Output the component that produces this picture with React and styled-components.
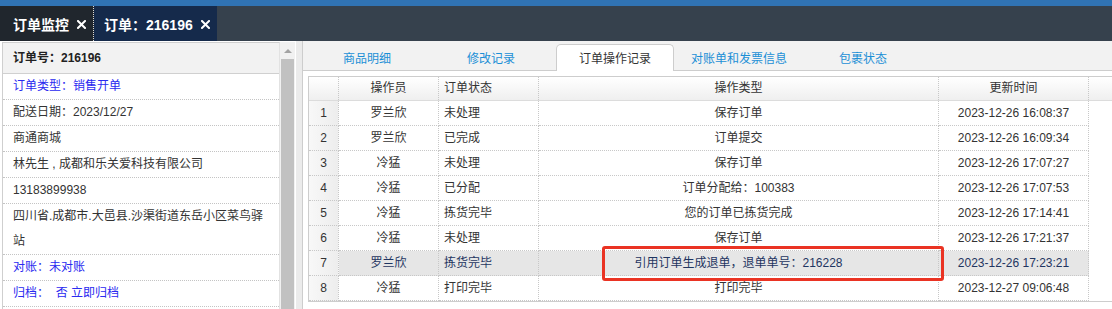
import styled, { createGlobalStyle } from "styled-components";

const GlobalStyle = createGlobalStyle`
	html, body {
		margin: 0;
		padding: 0;
		background: #fff;
	}
	body {
		font-family: "Liberation Sans", "Noto Sans CJK SC", sans-serif;
		font-size: 12px;
		color: #333;
	}
	* {
		box-sizing: border-box;
	}
`;

const COLS = "30px 100px 100px 400px 150px 1fr";

const records = [
	["罗兰欣", "未处理", "保存订单", "2023-12-26 16:08:37"],
	["罗兰欣", "已完成", "订单提交", "2023-12-26 16:09:34"],
	["冷猛", "未处理", "保存订单", "2023-12-26 17:07:27"],
	["冷猛", "已分配", "订单分配给：100383", "2023-12-26 17:07:53"],
	["冷猛", "拣货完毕", "您的订单已拣货完成", "2023-12-26 17:14:41"],
	["冷猛", "未处理", "保存订单", "2023-12-26 17:21:37"],
	["罗兰欣", "拣货完毕", "引用订单生成退单，退单单号：216228", "2023-12-26 17:23:21"],
	["冷猛", "打印完毕", "打印完毕", "2023-12-27 09:06:48"],
];

const tabs = ["商品明细", "修改记录", "订单操作记录", "对账单和发票信息", "包裹状态"];

const CloseIcon = () => (
	<svg width="9" height="9" viewBox="0 0 9 9">
		<path d="M1 1 L8 8 M8 1 L1 8" stroke="#fff" strokeWidth="2" strokeLinecap="square" />
	</svg>
);

const App = () => {
	return (
		<Page>
			<GlobalStyle />
			<TopStrip />
			<TabBar>
				<MainTab $first>
					订单监控
					<CloseBox>
						<CloseIcon />
					</CloseBox>
				</MainTab>
				<MainTab $current>
					订单：216196
					<CloseBox>
						<CloseIcon />
					</CloseBox>
				</MainTab>
			</TabBar>
			<Body>
				<LeftCol>
					<InfoPanel>
						<InfoHead>订单号：216196</InfoHead>
						<InfoRow $link>订单类型：销售开单</InfoRow>
						<InfoRow>配送日期：2023/12/27</InfoRow>
						<InfoRow>商通商城</InfoRow>
						<InfoRow>林先生 , 成都和乐关爱科技有限公司</InfoRow>
						<InfoRow>13183899938</InfoRow>
						<InfoRow>四川省.成都市.大邑县.沙渠街道东岳小区菜鸟驿站</InfoRow>
						<InfoRow $link>对账：未对账</InfoRow>
						<InfoRow $link>归档：&nbsp; 否 立即归档</InfoRow>
						<InfoRow>&nbsp;</InfoRow>
					</InfoPanel>
					<ScrollTrack>
						<ScrollArrow />
						<ScrollThumb />
					</ScrollTrack>
				</LeftCol>
				<Splitter />
				<RightPanel>
					<TabsHeader>
						{tabs.map((t, i) => (
							<SubTab key={t} $active={i === 2}>
								{t}
							</SubTab>
						))}
					</TabsHeader>
					<TabContent>
						<Grid>
							<HeadRow>
								<HeadCell />
								<HeadCell $align="center">操作员</HeadCell>
								<HeadCell>订单状态</HeadCell>
								<HeadCell $align="center">操作类型</HeadCell>
								<HeadCell $align="center">更新时间</HeadCell>
								<HeadCell $filler />
							</HeadRow>
							{records.map((r, i) => (
								<Row key={i} $selected={i === 6}>
									<NumCell>{i + 1}</NumCell>
									<Cell $align="center">{r[0]}</Cell>
									<Cell>{r[1]}</Cell>
									<Cell $align="center">{r[2]}</Cell>
									<Cell $align="center">{r[3]}</Cell>
									<Cell $filler />
								</Row>
							))}
							<Highlight />
						</Grid>
					</TabContent>
				</RightPanel>
			</Body>
		</Page>
	);
};

const Page = styled.div`
	width: 1112px;
	height: 309px;
	overflow: hidden;
	display: flex;
	flex-direction: column;
`;

const TopStrip = styled.div`
	height: 6px;
	background: #3073b4;
`;

const TabBar = styled.div`
	height: 35px;
	background: #36414d;
	display: flex;
`;

const MainTab = styled.div`
	display: flex;
	align-items: center;
	height: 100%;
	padding: 0 7px 0 ${(p) => (p.$first ? "13px" : "10px")};
	background: ${(p) => (p.$current ? "#152a4b" : "#20262d")};
	border-right: ${(p) => (p.$first ? "1px dotted #d8d8d8" : "none")};
	color: #fff;
	font-size: 14px;
	font-weight: 700;
	white-space: nowrap;
`;

const CloseBox = styled.span`
	display: flex;
	margin-left: 8px;
	margin-top: 1px;
`;

const Body = styled.div`
	flex: 1;
	display: flex;
	min-height: 0;
`;

const LeftCol = styled.div`
	width: 296px;
	display: flex;
	padding: 1px 1px 0 2px;
`;

const InfoPanel = styled.div`
	width: 278px;
	border-left: 1px solid #cfcfcf;
	border-top: 1px solid #cfcfcf;
	border-right: 1px solid #e2e2e2;
	overflow: hidden;
`;

const InfoHead = styled.div`
	height: 31px;
	line-height: 30px;
	padding-left: 10px;
	background: #f2f2f2;
	border-bottom: 1px solid #d0d0d0;
	font-weight: 700;
	color: #222;
`;

const InfoRow = styled.div`
	line-height: 25px;
	padding: 0 10px;
	border-bottom: 1px dotted #c4c4c4;
	color: ${(p) => (p.$link ? "#2a2af0" : "#333")};
`;

const ScrollTrack = styled.div`
	width: 15px;
	background: #f1f1f1;
	display: flex;
	flex-direction: column;
	align-items: center;
`;

const ScrollArrow = styled.div`
	height: 17px;
	display: flex;
	align-items: center;
	justify-content: center;
	&::after {
		content: "";
		border-left: 4px solid transparent;
		border-right: 4px solid transparent;
		border-bottom: 4px solid #a3a3a3;
	}
`;

const ScrollThumb = styled.div`
	flex: 1;
	width: 13px;
	background: #c1c1c1;
`;

const Splitter = styled.div`
	width: 6px;
	background: #ebebeb;
`;

const RightPanel = styled.div`
	flex: 1;
	min-width: 0;
	border-left: 1px solid #cdcdcd;
	display: flex;
	flex-direction: column;
`;

const TabsHeader = styled.div`
	height: 30px;
	background: #f2f2f2;
	border-bottom: 1px solid #cdcdcd;
	display: flex;
	align-items: flex-end;
	gap: 6px;
	padding-left: 5px;
`;

const SubTab = styled.div`
	width: 118px;
	height: ${(p) => (p.$active ? "27px" : "26px")};
	margin-bottom: ${(p) => (p.$active ? "-1px" : "0")};
	display: flex;
	align-items: center;
	justify-content: center;
	border-radius: 5px 5px 0 0;
	border: 1px solid ${(p) => (p.$active ? "#cdcdcd" : "transparent")};
	border-bottom: none;
	background: ${(p) => (p.$active ? "#fff" : "transparent")};
	color: ${(p) => (p.$active ? "#333" : "#1b8fd6")};
	padding-bottom: ${(p) => (p.$active ? "1px" : "0")};
`;

const TabContent = styled.div`
	flex: 1;
	background: #fff;
	padding: 5px 0 0 5px;
	overflow: hidden;
`;

const Grid = styled.div`
	position: relative;
	width: 830px;
	border: 1px solid #cdcdcd;
	border-right: none;
`;

const HeadRow = styled.div`
	display: grid;
	grid-template-columns: ${COLS};
	height: 24px;
	background: linear-gradient(to bottom, #ffffff 0, #efefef 100%);
	border-bottom: 1px solid #dcdcdc;
`;

const HeadCell = styled.div`
	line-height: 23px;
	padding: 0 5px;
	text-align: ${(p) => p.$align || "left"};
	border-right: ${(p) => (p.$filler ? "none" : "1px dotted #c8c8c8")};
	color: #333;
	white-space: nowrap;
`;

const Row = styled.div`
	display: grid;
	grid-template-columns: ${COLS};
	height: 25px;
	background: ${(p) => (p.$selected ? "#e6e6e6" : "#fff")};
	color: ${(p) => (p.$selected ? "#1f3561" : "#333")};
`;

const Cell = styled.div`
	line-height: 24px;
	padding: 0 5px;
	text-align: ${(p) => p.$align || "left"};
	border-right: ${(p) => (p.$filler ? "none" : "1px dotted #c8c8c8")};
	border-bottom: ${(p) => (p.$filler ? "none" : "1px dotted #c8c8c8")};
	background: ${(p) => (p.$filler ? "#fff" : "transparent")};
	white-space: nowrap;
`;

const NumCell = styled(Cell)`
	text-align: center;
	background: linear-gradient(to right, #f8f8f8 0, #ededed 100%);
	color: #333;
`;

const Highlight = styled.div`
	position: absolute;
	left: 293px;
	top: 169px;
	width: 342px;
	height: 35px;
	border: 3px solid #ea3323;
	border-radius: 3px;
	pointer-events: none;
`;

export default App;
